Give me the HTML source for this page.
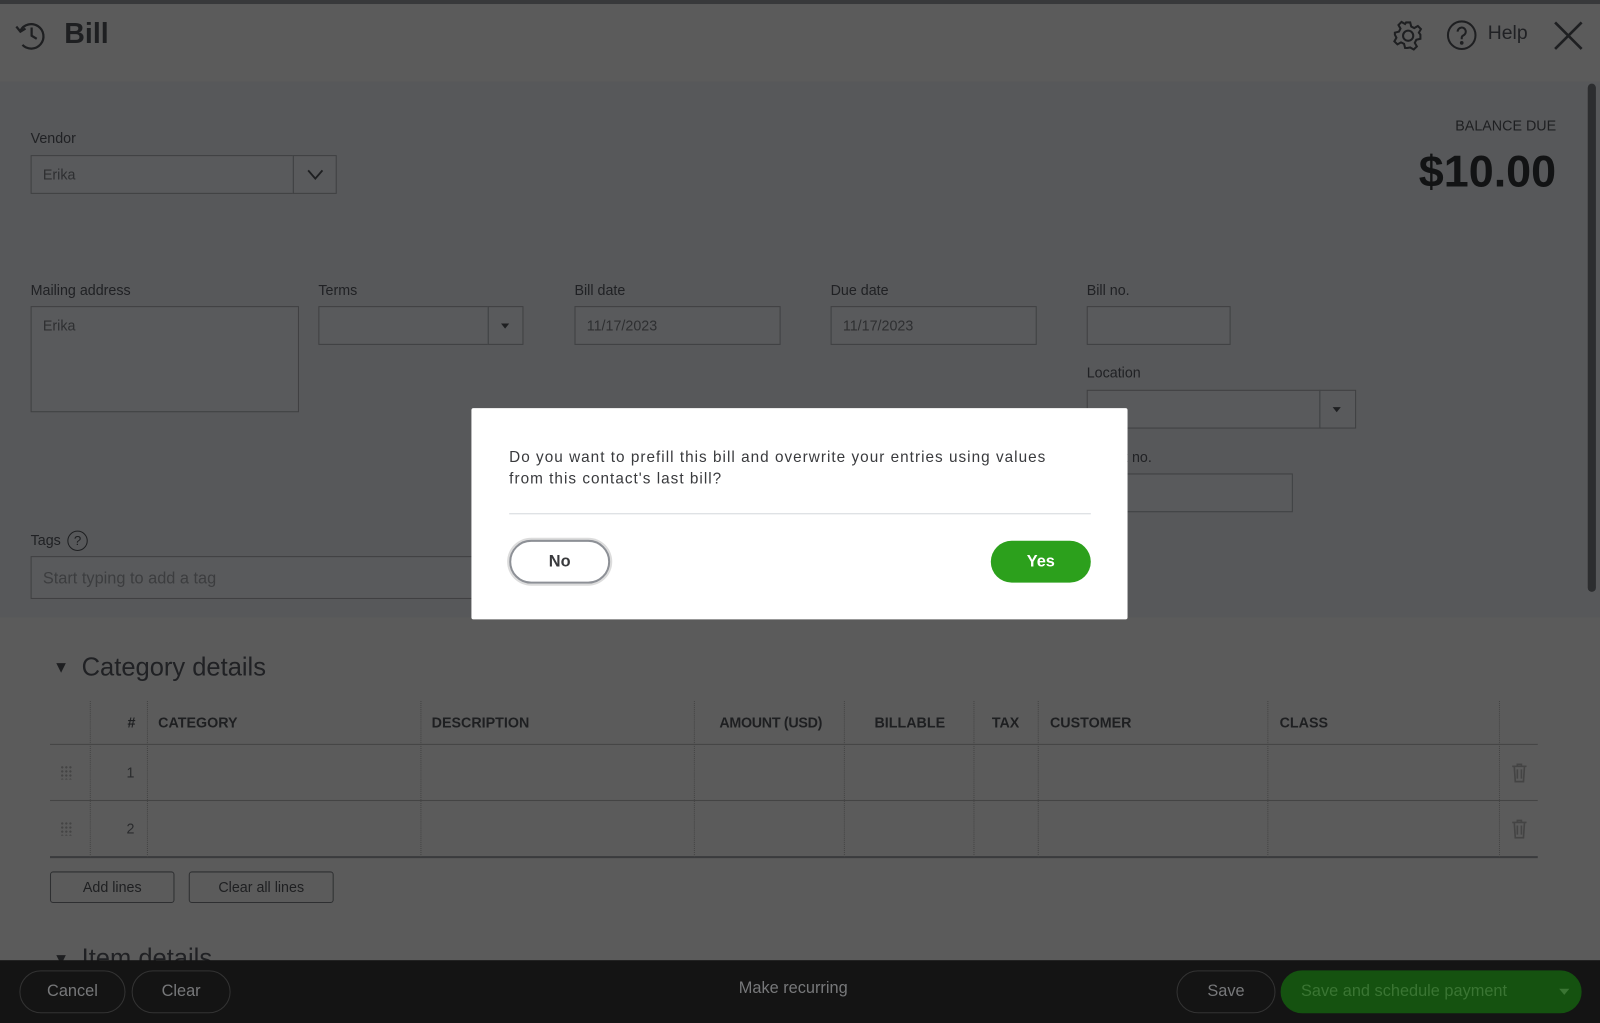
<!DOCTYPE html>
<html><head><meta charset="utf-8"><style>
*{box-sizing:border-box;margin:0;padding:0}
html,body{width:1600px;height:1023px;overflow:hidden;background:#5a5a5a;font-family:"Liberation Sans",sans-serif}
#w{position:absolute;left:0;top:0;width:1568px;height:1003px;transform:scale(1.0204);transform-origin:0 0;background:#5b5b5b;color:#1e1f21}
.a{position:absolute}
.lbl{font-size:14px;color:#202124}
.inp{position:absolute;border:1px solid #3f4042;background:#595a5c;height:38px;font-size:14px;color:#2e2f31;padding:10px 11px}
.btn{position:absolute;border:1px solid #2e2f31;border-radius:3px;height:31px;font-size:14px;color:#1e1f21;text-align:center;line-height:29px}
.fb{position:absolute;top:951px;height:42px;border:1px solid #333;border-radius:21px;color:#77787a;font-size:16px;text-align:center;line-height:40px}
.grip{position:absolute;width:12px;height:14px;background-image:radial-gradient(circle,#444 1px,transparent 1.2px);background-size:4px 4px}
</style></head><body><div id="w">
<div class="a" style="left:0;top:0;width:1568px;height:4px;background:#38393b"></div>
<div class="a" style="left:0;top:4px;width:1568px;height:76px;background:#5b5b5b"></div>
<div class="a" style="left:0;top:80px;width:1568px;height:525px;background:#57585a"></div>
<div class="a" style="left:1556px;top:82px;height:498px;background:#2c2d2f;border-radius:4px;width:8px"></div>
<svg class="a" style="left:14px;top:18px" width="34" height="34" viewBox="0 0 34 34" fill="none" stroke="#1e1f21" stroke-width="2.2"><path d="M6 12 A12 12 0 1 1 8 26"/><path d="M2 8 L6 13 L11 10"/><path d="M17 9 V17 L22 20"/></svg>
<div class="a" style="left:63px;top:17px;font-size:28px;font-weight:bold">Bill</div>
<svg class="a" style="left:1364px;top:19px" width="32" height="32" viewBox="0 0 32 32" fill="none" stroke="#1e1f21" stroke-width="2"><circle cx="16" cy="16" r="5"/><path d="M14 3h4l1 4 3 1.5 3.5-2 3 3-2 3.5L28 15v4l-4 1-1.5 3 2 3.5-3 3-3.5-2L15 28h-2l-1-4-3-1.5-3.5 2-3-3 2-3.5L3 15v-2l4-1 1.5-3-2-3.5 3-3 3.5 2L14 3z"/></svg>
<svg class="a" style="left:1417px;top:19px" width="31" height="31" viewBox="0 0 31 31" fill="none" stroke="#1e1f21" stroke-width="2"><circle cx="15.5" cy="15.5" r="13.5"/><path d="M11.5 12a4 4 0 1 1 5.5 3.7c-1 .5-1.5 1.2-1.5 2.3v1.5"/><circle cx="15.5" cy="23" r=".8" fill="#1e1f21"/></svg>
<div class="a" style="left:1458px;top:22px;font-size:19px;color:#202124">Help</div>
<svg class="a" style="left:1522px;top:20px" width="30" height="30" viewBox="0 0 30 30" stroke="#1e1f21" stroke-width="2.6"><path d="M2 2L28 28M28 2L2 28"/></svg>

<div class="a lbl" style="left:30px;top:127px">Vendor</div>
<div class="inp" style="left:30px;top:152px;width:258px">Erika</div>
<div class="inp" style="left:287px;top:152px;width:43px"><svg width="18" height="12" style="position:absolute;left:12px;top:12px" fill="none" stroke="#1e1f21" stroke-width="1.8"><path d="M2 2l7 8 7-8"/></svg></div>
<div class="a" style="left:1400px;top:115px;width:125px;text-align:right;font-size:14px">BALANCE DUE</div>
<div class="a" style="left:1300px;top:144px;width:225px;text-align:right;font-size:44px;font-weight:bold;color:#121314">$10.00</div>

<div class="a lbl" style="left:30px;top:276px">Mailing address</div>
<div class="inp" style="left:30px;top:300px;width:263px;height:104px">Erika</div>
<div class="a lbl" style="left:312px;top:276px">Terms</div>
<div class="inp" style="left:312px;top:300px;width:167px"></div>
<div class="inp" style="left:478px;top:300px;width:35px"><div style="position:absolute;left:12px;top:16px;border-left:4px solid transparent;border-right:4px solid transparent;border-top:5px solid #1e1f21"></div></div>
<div class="a lbl" style="left:563px;top:276px">Bill date</div>
<div class="inp" style="left:563px;top:300px;width:202px">11/17/2023</div>
<div class="a lbl" style="left:814px;top:276px">Due date</div>
<div class="inp" style="left:814px;top:300px;width:202px">11/17/2023</div>
<div class="a lbl" style="left:1065px;top:276px">Bill no.</div>
<div class="inp" style="left:1065px;top:300px;width:141px"></div>
<div class="a lbl" style="left:1065px;top:357px">Location</div>
<div class="inp" style="left:1065px;top:382px;width:229px"></div>
<div class="inp" style="left:1293px;top:382px;width:36px"><div style="position:absolute;left:12px;top:16px;border-left:4px solid transparent;border-right:4px solid transparent;border-top:5px solid #1e1f21"></div></div>
<div class="a lbl" style="left:1065px;top:440px">Permit no.</div>
<div class="inp" style="left:1065px;top:464px;width:202px"></div>
<div class="a lbl" style="left:30px;top:521px">Tags</div>
<div class="a" style="left:66px;top:520px;width:20px;height:20px;border:1.5px solid #1e1f21;border-radius:50%;font-size:13px;text-align:center;line-height:17px">?</div>
<div class="inp" style="left:30px;top:545px;width:440px;height:42px;color:#3c3d3f;font-size:16px;padding-top:13px">Start typing to add a tag</div>

<div class="a" style="left:52px;top:646px;font-size:16px">▼</div>
<div class="a" style="left:80px;top:640px;font-size:25px;color:#202124">Category details</div>
<div class="a" style="left:49px;top:687px;width:1458px;height:154px;border-bottom:2px solid #3a3b3d"></div>
<div class="a" style="left:49px;top:729px;width:1458px;border-top:1px solid #444"></div>
<div class="a" style="left:49px;top:784px;width:1458px;border-top:1px solid #444"></div>
<div class="a" style="left:88px;top:687px;height:153px;border-left:1px dotted #444"></div>
<div class="a" style="left:144px;top:687px;height:153px;border-left:1px dotted #444"></div>
<div class="a" style="left:412px;top:687px;height:153px;border-left:1px dotted #444"></div>
<div class="a" style="left:680px;top:687px;height:153px;border-left:1px dotted #444"></div>
<div class="a" style="left:827px;top:687px;height:153px;border-left:1px dotted #444"></div>
<div class="a" style="left:954px;top:687px;height:153px;border-left:1px dotted #444"></div>
<div class="a" style="left:1017px;top:687px;height:153px;border-left:1px dotted #444"></div>
<div class="a" style="left:1242px;top:687px;height:153px;border-left:1px dotted #444"></div>
<div class="a" style="left:1469px;top:687px;height:153px;border-left:1px dotted #444"></div>
<div class="a" style="font-size:14px;font-weight:bold;top:700px;left:125px">#</div>
<div class="a" style="font-size:14px;font-weight:bold;top:700px;left:155px">CATEGORY</div>
<div class="a" style="font-size:14px;font-weight:bold;top:700px;left:423px">DESCRIPTION</div>
<div class="a" style="font-size:14px;font-weight:bold;top:700px;left:705px;letter-spacing:-0.3px">AMOUNT (USD)</div>
<div class="a" style="font-size:14px;font-weight:bold;top:700px;left:857px">BILLABLE</div>
<div class="a" style="font-size:14px;font-weight:bold;top:700px;left:972px">TAX</div>
<div class="a" style="font-size:14px;font-weight:bold;top:700px;left:1029px">CUSTOMER</div>
<div class="a" style="font-size:14px;font-weight:bold;top:700px;left:1254px">CLASS</div>
<div class="a" style="font-size:14px;top:749px;left:124px;color:#2a2b2d">1</div>
<div class="a" style="font-size:14px;top:804px;left:124px;color:#2a2b2d">2</div>
<div class="grip" style="left:59px;top:750px"></div>
<div class="grip" style="left:59px;top:805px"></div>
<svg class="a" style="left:1481px;top:747px" width="16" height="20" fill="none" stroke="#444" stroke-width="1.6"><path d="M1 4h14M6 4V2h4v2M3 4l1 15h8l1-15M6 7v9M10 7v9"/></svg>
<svg class="a" style="left:1481px;top:802px" width="16" height="20" fill="none" stroke="#444" stroke-width="1.6"><path d="M1 4h14M6 4V2h4v2M3 4l1 15h8l1-15M6 7v9M10 7v9"/></svg>
<div class="btn" style="left:49px;top:854px;width:122px">Add lines</div>
<div class="btn" style="left:185px;top:854px;width:142px">Clear all lines</div>
<div class="a" style="left:52px;top:932px;font-size:16px">▼</div>
<div class="a" style="left:80px;top:925px;font-size:25px;color:#202124">Item details</div>

<div class="a" style="left:0;top:941px;width:1568px;height:62px;background:#141414"></div>
<div class="fb" style="left:19px;width:104px">Cancel</div>
<div class="fb" style="left:129px;width:97px">Clear</div>
<div class="a" style="left:724px;top:960px;font-size:16px;color:#77787a">Make recurring</div>
<div class="fb" style="left:1153px;width:97px">Save</div>
<div class="fb" style="left:1255px;width:295px;background:#155210;border-color:#155210;color:#3a7533;text-align:left;padding-left:19px">Save and schedule payment<span style="position:absolute;left:272px;top:17px;border-left:5px solid transparent;border-right:5px solid transparent;border-top:6px solid #3a7533"></span></div>

<div class="a" style="left:462px;top:400px;width:643px;height:207px;background:#fff;border-radius:2px">
<div class="a" style="left:37px;top:38px;width:600px;font-size:15px;line-height:21px;letter-spacing:1px;color:#393a3d;white-space:nowrap">Do you want to prefill this bill and overwrite your entries using values<br>from this contact's last bill?</div>
<div class="a" style="left:37px;top:103px;width:570px;border-top:1px solid #d4d7dc"></div>
<div class="a" style="left:37px;top:129px;width:99px;height:43px;border:2px solid #8d9096;border-radius:22px;box-shadow:0 0 0 2px #dcdcdc;font-size:16px;font-weight:bold;text-align:center;line-height:39px;color:#393a3d">No</div>
<div class="a" style="left:509px;top:130px;width:98px;height:41px;background:#2ca01c;border-radius:21px;font-size:16px;font-weight:bold;text-align:center;line-height:41px;color:#fff">Yes</div>
</div>
</div></body></html>
